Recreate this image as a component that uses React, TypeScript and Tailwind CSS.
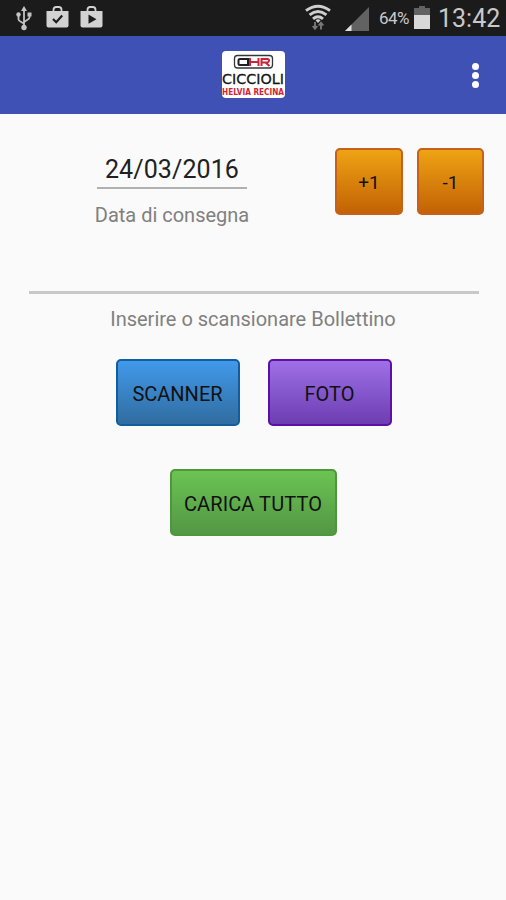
import { ReactNode } from 'react'

interface ActionButtonProps {
  children: ReactNode
  className?: string
}

function ActionButton({ children, className = '' }: ActionButtonProps) {
  return (
    <button
      type="button"
      className={`flex h-[67px] items-center justify-center whitespace-nowrap rounded-[5px] border-2 bg-linear-to-b bg-origin-border pt-[3px] text-[#111111] ${className}`}
    >
      {children}
    </button>
  )
}

function UsbIcon() {
  return (
    <svg width="16" height="25" viewBox="0 0 16 25" fill="none" stroke="#c4c4c4" strokeWidth="1.8">
      <path d="M8 4v17M2.500 9v4.500c0 2 5.500 3 5.500 5M13.500 9v2.500c0 2.500-5.500 3-5.500 5.500" />
      <path d="M8 0l3 5H5z" fill="#c4c4c4" stroke="none" />
      <circle cx="2.500" cy="8.500" r="2.200" fill="#c4c4c4" stroke="none" />
      <path d="M11.500 6.500h4v4h-4z" fill="#c4c4c4" stroke="none" />
      <circle cx="8" cy="21.500" r="2.700" fill="#c4c4c4" stroke="none" />
    </svg>
  )
}

function BagIcon({ type }: { type: 'check' | 'play' }) {
  return (
    <svg width="23" height="22" viewBox="0 0 23 22" fill="none">
      <path d="M7.500 6V3.800Q7.500 1 10.200 1h2.600q2.700 0 2.700 2.800V6" stroke="#d2d2d2" strokeWidth="1.800" />
      <path d="M0.500 5h22v14.500q0 2-2 2h-18q-2 0-2-2z" fill="#d2d2d2" />
      {type === 'check' ? (
        <path d="M7 13l3.200 3.200L16.200 9.500" stroke="#1c1c1c" strokeWidth="2.200" />
      ) : (
        <path d="M8.500 8.500l8 4.700-8 4.500z" fill="#1c1c1c" />
      )}
    </svg>
  )
}

function WifiIcon() {
  return (
    <svg width="26" height="26" viewBox="0 0 26 26" fill="none" className="overflow-visible">
      <g stroke="#cfcfcf" strokeWidth="2.900">
        <path d="M1 4.700Q13-4.100 25 4.700" />
        <path d="M4.600 8.900Q13 2.200 21.400 8.900" />
        <path d="M8 12.800Q13 8.600 18 12.800" />
      </g>
      <path d="M10.500 14.200Q13 12.500 15.500 14.200L13 17z" fill="#cfcfcf" />
      <path d="M10 16v7M7.700 20l2.300 2.800 2.300-2.800M16 23.500v-7M13.700 19.500l2.300-2.800 2.300 2.800" stroke="#777777" strokeWidth="1.900" />
    </svg>
  )
}

function SignalIcon() {
  return (
    <svg width="24" height="24" viewBox="0 0 24 24">
      <path d="M24 0v24H0z" fill="#626262" />
      <path d="M6.500 17.500V24H0z" fill="#e0e0e0" />
    </svg>
  )
}

function BatteryIcon() {
  return (
    <svg width="16" height="23" viewBox="0 0 16 23">
      <path d="M5 0h6v2h5v7H0V2h5z" fill="#626262" />
      <path d="M0 9h16v14H0z" fill="#d8d8d8" />
    </svg>
  )
}

function StatusBar() {
  return (
    <div className="flex h-9 items-start justify-between bg-[#1b1b1b] pl-4 pr-[5px] pt-[6px]">
      <div className="flex items-start">
        <UsbIcon />
        <div className="ml-[14px]">
          <BagIcon type="check" />
        </div>
        <div className="ml-[11px]">
          <BagIcon type="play" />
        </div>
      </div>
      <div className="flex items-start text-[#c9c9c9]">
        <WifiIcon />
        <div className="ml-[14px] mt-px">
          <SignalIcon />
        </div>
        <span className="ml-[10px] mt-px w-[35px] text-[17px] leading-[22px] tracking-[-0.5px]">64%</span>
        <BatteryIcon />
        <span className="ml-[8px] w-[63px] text-[25px] leading-[25px]">13:42</span>
      </div>
    </div>
  )
}

function Logo() {
  return (
    <svg width="64" height="48" viewBox="0 0 64 48" className="overflow-visible">
      <rect x="1" width="63" height="47" rx="4" fill="#ffffff" />
      <rect x="13.500" y="4.500" width="38" height="12.500" rx="3" fill="none" stroke="#33363a" strokeWidth="1.300" />
      <g fill="none" strokeWidth="2">
        <path d="M27 8h-8q-1.500 0-1.500 1.500v3q0 1.500 1.500 1.500h8z" stroke="#202020" />
        <path d="M29 7v8M29 11h8M37.500 7v8" stroke="#c92539" />
        <path d="M40.500 15V8h6q1.500 0 1.500 1.500t-1.500 2h-6M44.500 11.500l4 3.500" stroke="#c92539" />
      </g>
      <text x="1" y="32.500" textLength="62" lengthAdjust="spacingAndGlyphs" fontFamily="'DejaVu Sans', sans-serif" fontSize="14.500" fill="#161616" stroke="#161616" strokeWidth="0.300">
        CICCIOLI
      </text>
      <text x="1" y="43.500" textLength="62" lengthAdjust="spacingAndGlyphs" fontFamily="'DejaVu Sans', sans-serif" fontSize="9" fontWeight="bold" fill="#d32232">
        HELVIA RECINA
      </text>
    </svg>
  )
}

function AppBar() {
  return (
    <header className="grid h-[78px] grid-cols-[1fr_64px_1fr] items-center bg-[#3f51b5] pr-[27px] pl-[5px]">
      <div className="col-start-2 ml-[11px]">
        <Logo />
      </div>
      <button type="button" aria-label="Menu" className="flex flex-col gap-[2px] justify-self-end">
        <span className="size-[7px] rounded-full bg-white" />
        <span className="size-[7px] rounded-full bg-white" />
        <span className="size-[7px] rounded-full bg-white" />
      </button>
    </header>
  )
}

export default function App() {
  return (
    <div className="h-[900px] w-[506px] overflow-hidden bg-[#fafafa] font-['Roboto',sans-serif]">
      <StatusBar />
      <AppBar />
      <main>
        <section className="flex justify-end pr-[22px] pt-[33px]">
          <div className="mr-[88px] flex w-[150px] flex-col items-center">
            <div className="h-[42px] w-[150px] border-b-2 border-[#b0b0b0] text-center text-[25px] leading-[45px] tracking-[0.1px] text-[#212121]">
              24/03/2016
            </div>
            <div className="mt-[13px] whitespace-nowrap text-[20px] leading-[26px] text-[#808080]">
              Data di consegna
            </div>
          </div>
          <div className="flex gap-[14px] pt-px">
            <ActionButton className="w-[68px] border-[#c7601a] from-[#efa514] to-[#c16005] text-[19px]">+1</ActionButton>
            <ActionButton className="w-[67px] border-[#c7601a] from-[#efa514] to-[#c16005] text-[19px]">-1</ActionButton>
          </div>
        </section>
        <section className="mt-[36px] flex flex-col items-center">
          <div className="ml-px h-[30px] w-[450px] border-b-[3px] border-[#c8c8c8]" />
          <div className="mt-[12px] whitespace-nowrap text-[20px] leading-[26px] text-[#808080]">
            Inserire o scansionare Bollettino
          </div>
          <div className="ml-px mt-[27px] flex gap-[28px]">
            <ActionButton className="w-[124px] border-[#125d9d] from-[#429bed] to-[#306b9e] text-[20px]">SCANNER</ActionButton>
            <ActionButton className="w-[124px] border-[#5b10a7] from-[#a071e8] to-[#6b3cb0] text-[20px]">FOTO</ActionButton>
          </div>
          <ActionButton className="mt-[43px] w-[167px] border-[#4c983b] from-[#6cc553] to-[#539544] text-[20px] tracking-[0.1px]">
            CARICA TUTTO
          </ActionButton>
        </section>
      </main>
    </div>
  )
}
